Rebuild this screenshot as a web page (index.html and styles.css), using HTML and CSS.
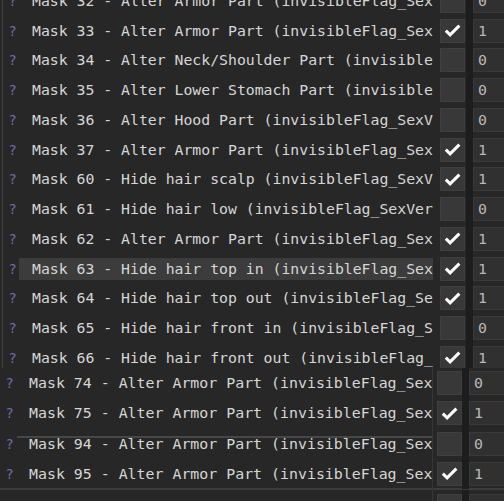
FILE: index.html
```html
<!DOCTYPE html>
<html>
<head>
<meta charset="utf-8">
<link rel="stylesheet" href="styles.css">
</head>
<body>
<div class="panel top">
  <div class="list">
    <div class="row"><span class="q">?</span><span class="name">Mask 32 - Alter Armor Part (invisibleFlag_Sex</span><span class="chk"></span><span class="stripe"></span><span class="val">0</span></div>
    <div class="row"><span class="q">?</span><span class="name">Mask 33 - Alter Armor Part (invisibleFlag_Sex</span><span class="chk on"><svg viewBox="0 0 18 14"><polyline points="1.8,7.2 6.4,11.6 16.4,1.8"/></svg></span><span class="stripe"></span><span class="val">1</span></div>
    <div class="row"><span class="q">?</span><span class="name">Mask 34 - Alter Neck/Shoulder Part (invisible</span><span class="chk"></span><span class="stripe"></span><span class="val">0</span></div>
    <div class="row"><span class="q">?</span><span class="name">Mask 35 - Alter Lower Stomach Part (invisible</span><span class="chk"></span><span class="stripe"></span><span class="val">0</span></div>
    <div class="row"><span class="q">?</span><span class="name">Mask 36 - Alter Hood Part (invisibleFlag_SexV</span><span class="chk"></span><span class="stripe"></span><span class="val">0</span></div>
    <div class="row"><span class="q">?</span><span class="name">Mask 37 - Alter Armor Part (invisibleFlag_Sex</span><span class="chk on"><svg viewBox="0 0 18 14"><polyline points="1.8,7.2 6.4,11.6 16.4,1.8"/></svg></span><span class="stripe"></span><span class="val">1</span></div>
    <div class="row"><span class="q">?</span><span class="name">Mask 60 - Hide hair scalp (invisibleFlag_SexV</span><span class="chk on"><svg viewBox="0 0 18 14"><polyline points="1.8,7.2 6.4,11.6 16.4,1.8"/></svg></span><span class="stripe"></span><span class="val">1</span></div>
    <div class="row"><span class="q">?</span><span class="name">Mask 61 - Hide hair low (invisibleFlag_SexVer</span><span class="chk"></span><span class="stripe"></span><span class="val">0</span></div>
    <div class="row"><span class="q">?</span><span class="name">Mask 62 - Alter Armor Part (invisibleFlag_Sex</span><span class="chk on"><svg viewBox="0 0 18 14"><polyline points="1.8,7.2 6.4,11.6 16.4,1.8"/></svg></span><span class="stripe"></span><span class="val">1</span></div>
    <div class="row sel"><span class="q">?</span><span class="name">Mask 63 - Hide hair top in (invisibleFlag_Sex</span><span class="chk on"><svg viewBox="0 0 18 14"><polyline points="1.8,7.2 6.4,11.6 16.4,1.8"/></svg></span><span class="stripe"></span><span class="val">1</span></div>
    <div class="row"><span class="q">?</span><span class="name">Mask 64 - Hide hair top out (invisibleFlag_Se</span><span class="chk on"><svg viewBox="0 0 18 14"><polyline points="1.8,7.2 6.4,11.6 16.4,1.8"/></svg></span><span class="stripe"></span><span class="val">1</span></div>
    <div class="row"><span class="q">?</span><span class="name">Mask 65 - Hide hair front in (invisibleFlag_S</span><span class="chk"></span><span class="stripe"></span><span class="val">0</span></div>
    <div class="row"><span class="q">?</span><span class="name">Mask 66 - Hide hair front out (invisibleFlag_</span><span class="chk on"><svg viewBox="0 0 18 14"><polyline points="1.8,7.2 6.4,11.6 16.4,1.8"/></svg></span><span class="stripe"></span><span class="val">1</span></div>
  </div>
</div>
<div class="panel low">
  <div class="row"><span class="q">?</span><span class="name">Mask 74 - Alter Armor Part (invisibleFlag_Sex</span><span class="vline"></span><span class="chk"></span><span class="stripe"></span><span class="val">0</span></div>
  <div class="row"><span class="q">?</span><span class="name">Mask 75 - Alter Armor Part (invisibleFlag_Sex</span><span class="vline"></span><span class="chk on"><svg viewBox="0 0 18 14"><polyline points="1.8,7.2 6.4,11.6 16.4,1.8"/></svg></span><span class="stripe"></span><span class="val">1</span></div>
  <div class="row ghost"><span class="q">?</span><span class="name">Mask 94 - Alter Armor Part (invisibleFlag_Sex</span><span class="vline"></span><span class="chk"></span><span class="stripe"></span><span class="val">0</span></div>
  <div class="row"><span class="q">?</span><span class="name">Mask 95 - Alter Armor Part (invisibleFlag_Sex</span><span class="vline"></span><span class="chk on"><svg viewBox="0 0 18 14"><polyline points="1.8,7.2 6.4,11.6 16.4,1.8"/></svg></span><span class="stripe"></span><span class="val">1</span></div>
  <div class="row tail"><span class="q"></span><span class="name"></span><span class="vline"></span><span class="chk"></span><span class="stripe"></span><span class="val"></span></div>
</div>
</body>
</html>
```
FILE: styles.css
```css
html, body {
  margin: 0;
  padding: 0;
}
body {
  width: 504px;
  height: 501px;
  overflow: hidden;
  background: #272727;
  font-family: "DejaVu Sans Mono", "Liberation Mono", monospace;
  font-size: 14.8px;
  color: #d6d6d6;
}
.panel {
  overflow: hidden;
}
.top {
  height: 368px;
  margin-left: 2px;
  border-left: 1px solid #404040;
}
.top .list {
  margin-top: -14px;
}
.row {
  display: grid;
  align-items: center;
}
.top .row {
  height: 29.75px;
  grid-template-columns: 16px 414px 7px 25px 1px 7px 40px;
}
.top .row .chk {
  grid-column: 4;
}
.top .row .stripe {
  grid-column: 6;
}
.top .row .val {
  grid-column: 7;
}
.low .row {
  height: 30.25px;
  grid-template-columns: 17px 415px 1px 4px 25px 7px 40px;
  font-size: 14.9px;
}
.low .row .chk {
  grid-column: 5;
}
.low .row .stripe {
  grid-column: 6;
}
.low .row .val {
  grid-column: 7;
}
.q {
  font-family: "DejaVu Sans", sans-serif;
  font-size: 14px;
  color: #6e6ca8;
  padding-left: 6px;
  line-height: 22px;
}
.name {
  height: 22px;
  line-height: 22px;
  padding-left: 13px;
  white-space: nowrap;
  overflow: hidden;
}
.low .name {
  padding-left: 12px;
}
.sel .name {
  background: #3c3c3c;
}
.ghost .name {
  background: linear-gradient(#474747, #474747) 0 3px / 100% 2px no-repeat;
}
.vline {
  align-self: stretch;
  background: #363636;
}
.stripe {
  align-self: stretch;
  background: #1d1d1d;
}
.chk {
  height: 24px;
  box-sizing: border-box;
  background: #383838;
  border: 1px solid #3f3f3f;
  display: flex;
  align-items: center;
  justify-content: center;
}
.chk svg {
  width: 17px;
  height: 13px;
  fill: none;
  stroke: #ffffff;
  stroke-width: 3.3;
  stroke-linejoin: miter;
}
.val {
  height: 24px;
  box-sizing: border-box;
  background: #303030;
  border: 1px solid #393939;
  padding-left: 4px;
  line-height: 22px;
  color: #b8b8b8;
}
.tail {
  border-top: 2px solid #3b3b3b;
  margin-top: -1px;
}
.tail .chk, .tail .val {
  align-self: start;
  margin-top: 4px;
}
```
